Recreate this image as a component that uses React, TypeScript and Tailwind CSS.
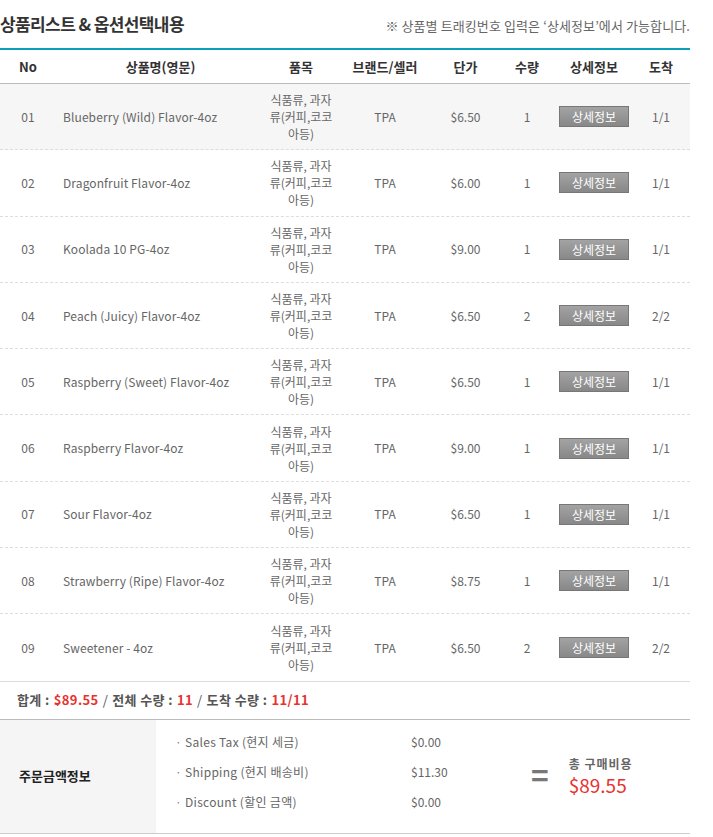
import React from 'react';

const items = [
  { no: '01', name: 'Blueberry (Wild) Flavor-4oz', price: '$6.50', qty: '1', arrive: '1/1' },
  { no: '02', name: 'Dragonfruit Flavor-4oz', price: '$6.00', qty: '1', arrive: '1/1' },
  { no: '03', name: 'Koolada 10 PG-4oz', price: '$9.00', qty: '1', arrive: '1/1' },
  { no: '04', name: 'Peach (Juicy) Flavor-4oz', price: '$6.50', qty: '2', arrive: '2/2' },
  { no: '05', name: 'Raspberry (Sweet) Flavor-4oz', price: '$6.50', qty: '1', arrive: '1/1' },
  { no: '06', name: 'Raspberry Flavor-4oz', price: '$9.00', qty: '1', arrive: '1/1' },
  { no: '07', name: 'Sour Flavor-4oz', price: '$6.50', qty: '1', arrive: '1/1' },
  { no: '08', name: 'Strawberry (Ripe) Flavor-4oz', price: '$8.75', qty: '1', arrive: '1/1' },
  { no: '09', name: 'Sweetener - 4oz', price: '$6.50', qty: '2', arrive: '2/2' },
];

const cols = 'grid grid-cols-[56px_209px_72px_96px_65px_58px_76px_58px]';

const fees = [
  { label: 'Sales Tax (현지 세금)', value: '$0.00' },
  { label: 'Shipping (현지 배송비)', value: '$11.30' },
  { label: 'Discount (할인 금액)', value: '$0.00' },
];

const App = () => {
  return (
    <div className="w-[690px] bg-white text-[12px] text-[#666] font-['Noto_Sans_CJK_KR',sans-serif]">
      {/* title */}
      <div className="h-[48px] flex items-center justify-between">
        <h2 className="text-[17px] font-bold text-[#333] tracking-[-0.6px] pb-[1px]">상품리스트 &amp; 옵션선택내용</h2>
        <p className="text-[13px] text-[#666] pt-[4px] tracking-[0.1px]">※ 상품별 트래킹번호 입력은 ‘상세정보’에서 가능합니다.</p>
      </div>

      <div className="border-t-2 border-[#0a9fba]">
        {/* header */}
        <div className={`${cols} h-[34px] items-center border-b border-[#bbb] text-[13px] font-bold text-[#333] text-center`}>
          <div>No</div>
          <div>상품명(영문)</div>
          <div>품목</div>
          <div>브랜드/셀러</div>
          <div>단가</div>
          <div>수량</div>
          <div>상세정보</div>
          <div>도착</div>
        </div>

        {items.map((it, i) => (
          <div
            key={it.no}
            className={`${cols} h-[66.3px] items-center text-center ${i === 0 ? 'bg-[#f6f6f6]' : ''} ${i < items.length - 1 ? 'border-b border-dashed border-[#ddd]' : ''}`}
          >
            <div>{it.no}</div>
            <div className="text-left pl-[7px] tracking-[0.1px]">{it.name}</div>
            <div className="leading-[17px] px-[1px]">식품류, 과자류(커피,코코아등)</div>
            <div>TPA</div>
            <div>{it.price}</div>
            <div>{it.qty}</div>
            <div className="flex justify-center">
              <button className="w-[70px] h-[21px] border border-[#777] bg-gradient-to-b from-[#a3a3a3] to-[#888] text-white text-[12px] leading-[19px]">
                상세정보
              </button>
            </div>
            <div>{it.arrive}</div>
          </div>
        ))}
      </div>

      {/* totals */}
      <div className="h-[39px] flex items-center pl-[17px] border-t border-[#ddd] border-b border-b-[#bbb] font-bold text-[13px] text-[#555] gap-[4px] tracking-[0.4px]">
        <span>합계 :</span>
        <span className="text-[#e8322f]">$89.55</span>
        <span className="font-normal">/</span>
        <span>전체 수량 :</span>
        <span className="text-[#e8322f]">11</span>
        <span className="font-normal">/</span>
        <span>도착 수량 :</span>
        <span className="text-[#e8322f]">11/11</span>
      </div>

      {/* order amount */}
      <div className="flex h-[114px] border-b border-[#ccc]">
        <div className="w-[156px] bg-[#f5f5f5] flex items-center pl-[19px] text-[13px] font-bold text-[#222]">
          주문금액정보
        </div>
        <div className="flex flex-col justify-center gap-[12px] pl-[19px] pb-[8px] w-[340px]">
          {fees.map((f) => (
            <div key={f.label} className="flex items-center h-[18px]">
              <span className="w-[10px] text-[#888]">·</span>
              <span className="w-[226px] tracking-[0.3px]">{f.label}</span>
              <span>{f.value}</span>
            </div>
          ))}
        </div>
        <div className="flex items-center gap-[20px] pl-[35px]">
          <span className="text-[30px] leading-none text-[#777] font-bold -mt-[4px]">=</span>
          <div className="flex flex-col gap-[2px]">
            <span className="text-[12px] leading-[16px] font-bold text-[#666] tracking-[1px]">총 구매비용</span>
            <span className="text-[19px] leading-[22px] text-[#e8322f]">$89.55</span>
          </div>
        </div>
      </div>
    </div>
  );
};

export default App;
